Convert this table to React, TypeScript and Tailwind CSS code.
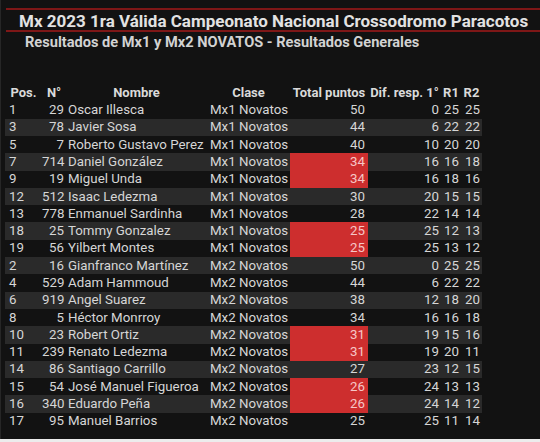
type Row = {
  pos: number;
  num: number;
  name: string;
  clase: string;
  total: number;
  dif: number;
  r1: number;
  r2: number;
  tie?: boolean;
};

const ROWS: Row[] = [
  { pos: 1, num: 29, name: 'Oscar Illesca', clase: 'Mx1 Novatos', total: 50, dif: 0, r1: 25, r2: 25 },
  { pos: 3, num: 78, name: 'Javier Sosa', clase: 'Mx1 Novatos', total: 44, dif: 6, r1: 22, r2: 22 },
  { pos: 5, num: 7, name: 'Roberto Gustavo Perez', clase: 'Mx1 Novatos', total: 40, dif: 10, r1: 20, r2: 20 },
  { pos: 7, num: 714, name: 'Daniel González', clase: 'Mx1 Novatos', total: 34, dif: 16, r1: 16, r2: 18, tie: true },
  { pos: 9, num: 19, name: 'Miguel Unda', clase: 'Mx1 Novatos', total: 34, dif: 16, r1: 18, r2: 16, tie: true },
  { pos: 12, num: 512, name: 'Isaac Ledezma', clase: 'Mx1 Novatos', total: 30, dif: 20, r1: 15, r2: 15 },
  { pos: 13, num: 778, name: 'Enmanuel Sardinha', clase: 'Mx1 Novatos', total: 28, dif: 22, r1: 14, r2: 14 },
  { pos: 18, num: 25, name: 'Tommy Gonzalez', clase: 'Mx1 Novatos', total: 25, dif: 25, r1: 12, r2: 13, tie: true },
  { pos: 19, num: 56, name: 'Yilbert Montes', clase: 'Mx1 Novatos', total: 25, dif: 25, r1: 13, r2: 12, tie: true },
  { pos: 2, num: 16, name: 'Gianfranco Martínez', clase: 'Mx2 Novatos', total: 50, dif: 0, r1: 25, r2: 25 },
  { pos: 4, num: 529, name: 'Adam Hammoud', clase: 'Mx2 Novatos', total: 44, dif: 6, r1: 22, r2: 22 },
  { pos: 6, num: 919, name: 'Angel Suarez', clase: 'Mx2 Novatos', total: 38, dif: 12, r1: 18, r2: 20 },
  { pos: 8, num: 5, name: 'Héctor Monrroy', clase: 'Mx2 Novatos', total: 34, dif: 16, r1: 16, r2: 18 },
  { pos: 10, num: 23, name: 'Robert Ortiz', clase: 'Mx2 Novatos', total: 31, dif: 19, r1: 15, r2: 16, tie: true },
  { pos: 11, num: 239, name: 'Renato Ledezma', clase: 'Mx2 Novatos', total: 31, dif: 19, r1: 20, r2: 11, tie: true },
  { pos: 14, num: 86, name: 'Santiago Carrillo', clase: 'Mx2 Novatos', total: 27, dif: 23, r1: 12, r2: 15 },
  { pos: 15, num: 54, name: 'José Manuel Figueroa', clase: 'Mx2 Novatos', total: 26, dif: 24, r1: 13, r2: 13, tie: true },
  { pos: 16, num: 340, name: 'Eduardo Peña', clase: 'Mx2 Novatos', total: 26, dif: 24, r1: 14, r2: 12, tie: true },
  { pos: 17, num: 95, name: 'Manuel Barrios', clase: 'Mx2 Novatos', total: 25, dif: 25, r1: 11, r2: 14 },
];

function Header() {
  return (
    <thead>
      <tr className="h-[17.4px] text-[13px] text-[#dadada] font-bold">
        <th className="text-center font-bold">Pos.</th>
        <th className="text-center font-bold">N°</th>
        <th className="text-center font-bold">Nombre</th>
        <th className="text-center font-bold">Clase</th>
        <th className="text-center font-bold">Total puntos</th>
        <th className="text-center font-bold">Dif. resp. 1°</th>
        <th className="text-center font-bold">R1</th>
        <th className="text-center font-bold">R2</th>
      </tr>
    </thead>
  );
}

function ResultRow({ row, striped }: { row: Row; striped: boolean }) {
  return (
    <tr className={`h-[17.3px] ${striped ? 'bg-[#2a2a2a]' : ''}`}>
      <td className="pl-[4px]">{row.pos}</td>
      <td className="text-right pr-[2px]">{row.num}</td>
      <td className="pl-[2px] whitespace-nowrap">{row.name}</td>
      <td className="pl-[3px] whitespace-nowrap">{row.clase}</td>
      <td className={`text-right pr-[3px] ${row.tie ? 'bg-[#cd2e2e] text-[#f6c6c6]' : ''}`}>{row.total}</td>
      <td className="text-right pr-[2px]">{row.dif}</td>
      <td className="text-right pr-[2px]">{row.r1}</td>
      <td className="text-right pr-[2px]">{row.r2}</td>
    </tr>
  );
}

export default function App() {
  return (
    <div className="w-[540px] h-[442px] bg-[#121212] flex flex-col overflow-hidden font-['Roboto',_'Liberation_Sans',_sans-serif]">
      <div className="flex-1 border-l border-[#262626]">
        <div className="mt-[8px] ml-[5px] border-y-2 border-[#7e1717] h-[24px] pl-[13px] pt-[1px] leading-[20px] text-[17px] font-bold text-[#e2e2e2] whitespace-nowrap">
          Mx 2023 1ra Válida Campeonato Nacional Crossodromo Paracotos
        </div>
        <div className="mt-[2px] pl-[24px] leading-[16px] text-[14.6px] font-bold text-[#d2d2d2] whitespace-nowrap">
          Resultados de Mx1 y Mx2 NOVATOS - Resultados Generales
        </div>

        <table className="mt-[34px] ml-[4px] w-[477px] table-fixed border-collapse text-[13.3px] leading-[16px] text-[#d6d6d6]">
          <colgroup>
            <col className="w-[37px]" />
            <col className="w-[24px]" />
            <col className="w-[141px]" />
            <col className="w-[83px]" />
            <col className="w-[78px]" />
            <col className="w-[73px]" />
            <col className="w-[20px]" />
            <col className="w-[21px]" />
          </colgroup>
          <Header />
          <tbody>
            {ROWS.map((row, i) => (
              <ResultRow key={row.pos} row={row} striped={i % 2 === 1} />
            ))}
          </tbody>
        </table>
      </div>
      <div className="h-[3px] bg-[#ececec]" />
    </div>
  );
}
